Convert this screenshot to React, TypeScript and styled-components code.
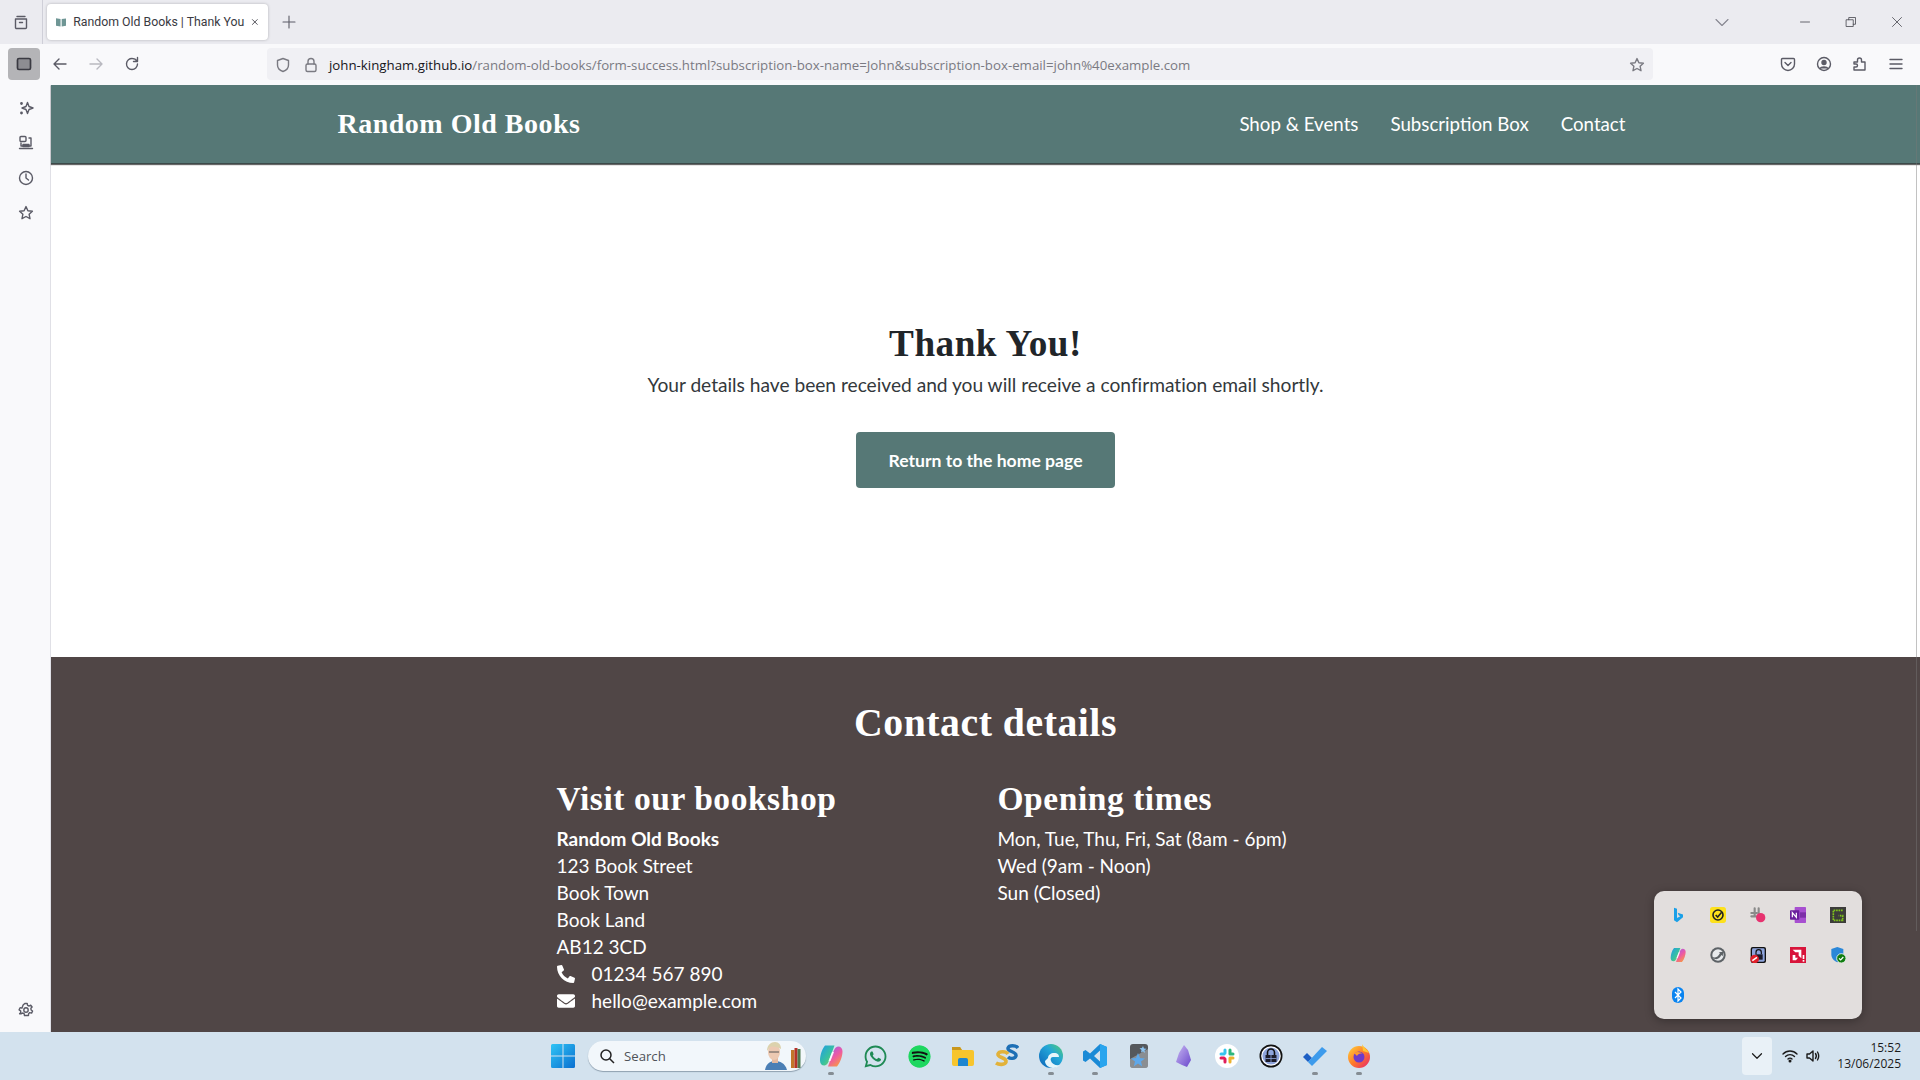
import styled, { createGlobalStyle } from "styled-components";
import { FaEnvelope, FaPhone, FaSpotify, FaWhatsapp } from "react-icons/fa";
import { ReactNode } from "react";

const GlobalStyle = createGlobalStyle`
  html, body { margin: 0; padding: 0; overflow: hidden; }
  body { font-family: Lato, "Liberation Sans", sans-serif; }
  * { box-sizing: border-box; }
`;

const titleFont = `"Liberation Serif", "DejaVu Serif", serif`;

// browser frame
const Screen = styled.div`
  position: relative;
  width: 1920px;
  height: 1080px;
  display: flex;
  flex-direction: column;
  overflow: hidden;
  background: #f9f9fb;
`;
const TabBar = styled.div`
  height: 44px;
  background: #ebebf0;
  display: flex;
  align-items: center;
  flex-shrink: 0;
`;
const TabsToggle = styled.div`
  width: 43px;
  height: 44px;
  display: flex;
  align-items: center;
  justify-content: center;
  border-right: 1px solid #cfcfd8;
  color: #5b5b66;
`;
const Tab = styled.div`
  width: 221px;
  height: 36px;
  margin-left: 4px;
  padding: 0 9px 0 9px;
  background: #fff;
  border-radius: 4px;
  box-shadow: 0 0 3px rgba(0, 0, 0, 0.25);
  display: flex;
  align-items: center;
  gap: 7px;
  font: 12.3px Roboto, sans-serif;
  color: #3a3a42;
  white-space: nowrap;
`;
const TabTitle = styled.span`
  flex: 1;
`;
const NewTab = styled.div`
  width: 36px;
  margin-left: 3px;
  display: flex;
  justify-content: center;
  color: #5b5b66;
`;
const WindowControls = styled.div`
  margin-left: auto;
  display: flex;
  align-items: center;
  color: #3c3c44;
`;
const ListTabs = styled.div`
  margin-right: 52px;
  display: flex;
  color: #85858f;
`;
const WindowButton = styled.div`
  width: 46px;
  display: flex;
  justify-content: center;
`;
const Toolbar = styled.div`
  height: 41px;
  flex-shrink: 0;
  padding: 4px 0 5px 8px;
  display: flex;
  align-items: center;
  color: #5b5b66;
`;
const SidebarToggle = styled.div`
  width: 32px;
  height: 32px;
  border-radius: 4px;
  background: #b4b4b7;
  display: flex;
  align-items: center;
  justify-content: center;
  color: #3a3a42;
`;
const NavIcons = styled.div`
  width: 227px;
  padding-left: 2px;
  display: flex;
`;
const NavIcon = styled.div<{ $muted?: boolean }>`
  width: 36px;
  height: 32px;
  display: flex;
  align-items: center;
  justify-content: center;
  color: ${(p) => (p.$muted ? "#b9b9c0" : "#5b5b66")};
`;
const UrlBar = styled.div`
  width: 1386px;
  height: 32px;
  background: #f0f0f4;
  border-radius: 4px;
  display: flex;
  align-items: center;
  padding: 1px 8px 0;
  font: 13.27px "Open Sans", sans-serif;
  color: #7a7a82;
  white-space: nowrap;
`;
const UrlIcons = styled.div`
  display: flex;
  gap: 12px;
  margin-right: 10px;
  align-items: center;
`;
const UrlHost = styled.span`
  color: #15141a;
`;
const StarSlot = styled.div`
  margin-left: auto;
  display: flex;
`;
const ToolbarRight = styled.div`
  margin-left: 127px;
  display: flex;
  gap: 20px;
  align-items: center;
`;
const Body = styled.div`
  flex: 1;
  display: flex;
  min-height: 0;
`;
const Sidebar = styled.div`
  width: 51px;
  flex-shrink: 0;
  border-right: 1px solid #e0e0e6;
  padding: 13px 0 12px 1px;
  display: flex;
  flex-direction: column;
  align-items: center;
  gap: 15px;
  color: #5b5b66;
`;
const SideIcon = styled.div<{ $bottom?: boolean }>`
  height: 20px;
  display: flex;
  align-items: center;
  margin-top: ${(p) => (p.$bottom ? "auto" : "0")};
`;

// the web page
const Page = styled.div`
  position: relative;
  flex: 1;
  display: flex;
  flex-direction: column;
  background: #fff;
`;
const ScrollThumb = styled.div`
  position: absolute;
  top: 0;
  right: 3px;
  width: 1px;
  height: 846px;
  background: rgba(120, 120, 120, 0.45);
`;
const Header = styled.header`
  height: 79px;
  background: #567876;
  box-shadow: 0 1px 1px rgba(0, 0, 0, 0.6);
  border-bottom: 1px solid #3c4a49;
  display: flex;
  justify-content: center;
  flex-shrink: 0;
`;
const HeaderInner = styled.div`
  width: 1320px;
  padding: 0 20px 0 12px;
  display: flex;
  align-items: center;
  justify-content: space-between;
`;
const Brand = styled.div`
  font-family: ${titleFont};
  font-weight: 700;
  font-size: 28px;
  letter-spacing: 0.5px;
  color: #fff;
`;
const Nav = styled.nav`
  display: flex;
  gap: 32px;
`;
const NavLink = styled.a`
  font-size: 18.7px;
  color: #fff;
`;
const Main = styled.main`
  height: 493px;
  display: flex;
  flex-direction: column;
  align-items: center;
  padding-top: 157px;
  color: #212529;
  flex-shrink: 0;
`;
const ThankYou = styled.h1`
  margin: 0;
  font-family: ${titleFont};
  font-size: 37.2px;
  line-height: 46px;
  letter-spacing: 0.5px;
`;
const Lead = styled.p`
  margin: 3px 0 33px;
  font-size: 19.2px;
  line-height: 29px;
  font-weight: 400;
  letter-spacing: -0.02px;
  color: #33383c;
`;
const HomeButton = styled.a`
  width: 259px;
  height: 56px;
  background: #567876;
  color: #fff;
  border-radius: 4px;
  display: flex;
  align-items: center;
  justify-content: center;
  font-size: 17.6px;
  font-weight: 700;
`;
const Footer = styled.footer`
  flex: 1;
  background: #504646;
  color: #fff;
  display: flex;
  flex-direction: column;
  align-items: center;
  padding-top: 43px;
`;
const FooterTitle = styled.h2`
  margin: 0 0 34px;
  font-family: ${titleFont};
  font-size: 39.8px;
  line-height: 46px;
  letter-spacing: 0.5px;
`;
const Columns = styled.div`
  width: 858px;
  display: grid;
  grid-template-columns: 441px 417px;
`;
const ColumnTitle = styled.h3`
  margin: 0 0 7px;
  font-family: ${titleFont};
  font-size: 33.5px;
  line-height: 38px;
  letter-spacing: 0.55px;
`;
const Line = styled.div<{ $strong?: boolean }>`
  height: 27px;
  display: flex;
  align-items: center;
  font-size: 19px;
  font-weight: ${(p) => (p.$strong ? 700 : 400)};
`;
const ContactIcon = styled.span`
  width: 35px;
  display: flex;
  font-size: 18px;
`;
const PhoneGlyph = styled(FaPhone)`
  transform: scaleX(-1);
`;

// windows taskbar
const Taskbar = styled.div`
  position: relative;
  height: 48px;
  flex-shrink: 0;
  background: #d3e2ee;
  display: flex;
  align-items: center;
  padding-left: 551px;
`;
const StartSlot = styled.div`
  width: 37px;
  display: flex;
`;
const SearchPill = styled.div`
  width: 218px;
  height: 30px;
  border-radius: 15px;
  background: #f2f7fb;
  box-shadow: 0 1px 1px rgba(60, 80, 100, 0.45);
  display: flex;
  align-items: center;
  padding: 0 4px 0 11px;
  gap: 9px;
  font: 13.2px "Open Sans", sans-serif;
  color: #4f5358;
`;
const SearchArt = styled.div`
  margin-left: auto;
  display: flex;
`;
const TaskIcons = styled.div`
  margin-left: 3px;
  display: flex;
`;
const TaskIcon = styled.div<{ $running?: boolean }>`
  position: relative;
  width: 44px;
  height: 48px;
  display: flex;
  align-items: center;
  justify-content: center;
  &::after {
    content: "";
    display: ${(p) => (p.$running ? "block" : "none")};
    position: absolute;
    left: 19px;
    bottom: 5px;
    width: 6px;
    height: 3px;
    border-radius: 2px;
    background: #858d94;
  }
`;
const SpotifyGlyph = styled(FaSpotify)`
  color: #1ed760;
  background: radial-gradient(circle, #111 62%, transparent 65%);
  border-radius: 50%;
`;
const Tray = styled.div`
  margin-left: auto;
  display: flex;
  align-items: center;
  padding-right: 19px;
  color: #1b1b1b;
`;
const TrayChevron = styled.div`
  width: 30px;
  height: 38px;
  border-radius: 4px;
  background: #e9f1f7;
  display: flex;
  align-items: center;
  justify-content: center;
`;
const TrayStatus = styled.div`
  margin-left: 10px;
  display: flex;
  align-items: center;
  gap: 7px;
`;
const Clock = styled.div`
  margin-left: 16px;
  text-align: right;
  font: 12px/16px "Open Sans", sans-serif;
  color: #1b1b1b;
`;
const TrayPopup = styled.div`
  position: absolute;
  left: 1654px;
  top: 891px;
  width: 208px;
  height: 128px;
  padding: 4px;
  background: #e2dedd;
  border-radius: 10px;
  box-shadow: 0 2px 10px rgba(0, 0, 0, 0.3);
  display: grid;
  grid-template-columns: repeat(5, 40px);
  grid-auto-rows: 40px;
`;
const TrayCell = styled.div`
  display: flex;
  align-items: center;
  justify-content: center;
`;

const Ico = ({ s = 16, children, sw = 1.4 }: { s?: number; children: ReactNode; sw?: number }) => (
  <svg width={s} height={s} viewBox="0 0 16 16" fill="none" stroke="currentColor" strokeWidth={sw} strokeLinecap="round" strokeLinejoin="round">
    {children}
  </svg>
);

const Star = () => (
  <Ico>
    <path d="M8 1.6l1.9 4.1 4.5.5-3.3 3 .9 4.500L8 11.500l-4 2.200.9-4.500-3.300-3 4.500-.5z" />
  </Ico>
);

const Color = ({ s = 24, children }: { s?: number; children: ReactNode }) => (
  <svg width={s} height={s} viewBox="0 0 24 24">
    {children}
  </svg>
);

const WindowsLogo = () => (
  <Color>
    <defs>
      <linearGradient id="win" x1="0" y1="0" x2="1" y2="1">
        <stop offset="0" stopColor="#2fc4f5" />
        <stop offset="1" stopColor="#0a6fd0" />
      </linearGradient>
    </defs>
    <path d="M0 1.500A1.500 1.500 0 011.500 0h10v11.500H0zM12.500 0h10A1.500 1.500 0 0124 1.500v10H12.500zM0 12.500h11.500V24h-10A1.500 1.500 0 010 22.500zM12.500 12.500H24v10a1.500 1.500 0 01-1.500 1.500h-10z" fill="url(#win)" />
  </Color>
);

const Portrait = () => (
  <svg width="38" height="28" viewBox="0 0 38 28">
    <path d="M1 28c1-6 5-9 10-9s10 2 12 9z" fill="#4b7fb5" />
    <rect x="8" y="14" width="6" height="7" fill="#e3b9a0" />
    <ellipse cx="10" cy="10" rx="6" ry="8" fill="#ecc9b2" />
    <path d="M3 9c0-6 4-9 8-9s6 3 6 7c-3-2-8-3-11-2-1 1-2 3-3 4z" fill="#dcd2ad" />
    <path d="M5 10h10" stroke="#555" strokeWidth="1" />
    <rect x="27" y="8" width="3.500" height="18" fill="#c2762b" />
    <rect x="30.500" y="6" width="3" height="20" fill="#b5332a" />
    <rect x="33.500" y="7" width="3" height="19" fill="#4f7a50" />
  </svg>
);

const Copilot = ({ s = 24 }: { s?: number }) => (
  <Color s={s}>
    <defs>
      <linearGradient id="copA" x1="0" y1="0" x2="1" y2="1">
        <stop offset="0" stopColor="#1f9ce8" />
        <stop offset="0.55" stopColor="#38c1a0" />
        <stop offset="1" stopColor="#8fd14f" />
      </linearGradient>
      <linearGradient id="copB" x1="0.2" y1="0" x2="0.8" y2="1">
        <stop offset="0" stopColor="#a45be6" />
        <stop offset="0.5" stopColor="#ee5aa2" />
        <stop offset="1" stopColor="#f9a03a" />
      </linearGradient>
    </defs>
    <path d="M18 22.500h-9l5.500-15c.8-2.500 2.500-5 4.500-5 3 0 4.500 2 4.500 5 0 4-2 11-5.500 15z" fill="url(#copB)" />
    <path d="M6 1.500h9.500L10 16.500c-.8 2.500-2.500 5-4.500 5-3 0-4.500-2-4.500-5 0-4 1.500-11 5-15z" fill="url(#copA)" />
    <path d="M13 8h2l-3.500 9h-2z" fill="#fff" opacity="0.85" />
  </Color>
);

const FolderIcon = () => (
  <Color>
    <path d="M1 5a2 2 0 012-2h6l2 3h10a2 2 0 012 2v12a2 2 0 01-2 2H3a2 2 0 01-2-2z" fill="#f7c52d" />
    <path d="M1 3h8l2 3H1z" fill="#c9971c" />
    <path d="M7 16a2 2 0 012-2h6a2 2 0 012 2v6H7z" fill="#1e86cf" />
  </Color>
);

const DoubleS = () => (
  <Color>
    <path d="M23 4c-2-3-9-3-10 0-1 4 9 3 8 8-1 3-6 3-8 1" fill="none" stroke="#1d6fb5" strokeWidth="3.400" />
    <path d="M13 10c-2-3-9-3-10 0-1 4 9 3 8 8-1 3-7 3-10 1" fill="none" stroke="#e2b23a" strokeWidth="3.600" />
  </Color>
);

const EdgeIcon = () => (
  <Color>
    <defs>
      <linearGradient id="edge" x1="0" y1="1" x2="1" y2="0">
        <stop offset="0" stopColor="#0b63b8" />
        <stop offset="0.6" stopColor="#23a6d8" />
        <stop offset="1" stopColor="#58cf6a" />
      </linearGradient>
    </defs>
    <circle cx="12" cy="12" r="12" fill="url(#edge)" />
    <path d="M9 14c0-3 3-5 6-5 4 0 5 2 5 4h-6c-2 0-3 2-2 4 1 3 5 5 9 4-2 2-4 3-7 3-4 0-8-3-8-7z" fill="#e6f5fa" />
  </Color>
);

const VsCode = () => (
  <Color>
    <path d="M17 0l7 3v18l-7 3L7 14.500l-4.500 3.500L0 16.500v-9L2.500 6 7 9.500zM17 6.500L11 12l6 5.500z" fill="#1a8ad6" />
    <path d="M17 0l7 3v18l-7 3z" fill="#2aa5ee" />
  </Color>
);

const StarBox = () => (
  <Color>
    <rect x="3" y="0" width="18" height="24" rx="3" fill="#55585c" />
    <path d="M3 15L21 5v16a3 3 0 01-3 3H6a3 3 0 01-3-3z" fill="#bfc3c8" opacity="0.5" />
    <path d="M11 9l2 5 5 .5-4 3 1.200 5L11 19.500 6.800 22.500 8 17.500l-4-3 5-.5z" fill="#5ea8ea" />
    <path d="M16 2l1 2.500 2.500.3-2 1.700.6 2.500L16 7.500 14 8.500l.5-2.500-2-1.700 2.500-.3z" fill="#8cc3f0" />
  </Color>
);

const Obsidian = () => (
  <Color>
    <defs>
      <linearGradient id="obs" x1="0" y1="0" x2="1" y2="1">
        <stop offset="0" stopColor="#c9b8f2" />
        <stop offset="1" stopColor="#6a48cc" />
      </linearGradient>
    </defs>
    <path d="M13 1l4 5 3 10-4 7-5-2-6-3 3-9z" fill="url(#obs)" />
  </Color>
);

const Slack = () => (
  <Color>
    <circle cx="12" cy="12" r="12" fill="#fff" />
    <rect x="8.500" y="4.500" width="3" height="6" rx="1.500" fill="#36c5f0" />
    <rect x="4.500" y="8.500" width="6" height="3" rx="1.500" fill="#36c5f0" />
    <rect x="13.500" y="4.500" width="3" height="6" rx="1.500" fill="#2eb67d" />
    <rect x="13.500" y="8.500" width="6" height="3" rx="1.500" fill="#2eb67d" />
    <rect x="13.500" y="12.500" width="6" height="3" rx="1.500" fill="#ecb22e" />
    <rect x="13.500" y="13.500" width="3" height="6" rx="1.500" fill="#ecb22e" />
    <rect x="8.500" y="13.500" width="3" height="6" rx="1.500" fill="#e01e5a" />
    <rect x="4.500" y="12.500" width="6" height="3" rx="1.500" fill="#e01e5a" />
  </Color>
);

const KeePass = () => (
  <Color>
    <circle cx="12" cy="12" r="11.500" fill="#111" />
    <circle cx="12" cy="12" r="9.800" fill="#fff" />
    <circle cx="12" cy="12" r="8.600" fill="#8ea4dc" />
    <path d="M8.500 11V8.500a3.500 3.500 0 017 0V11" fill="none" stroke="#111" strokeWidth="1.600" />
    <rect x="6.500" y="11" width="11" height="7" fill="#1c1c2a" />
    <path d="M6.500 14.500h11M12 11v7" stroke="#8ea4dc" strokeWidth="0.800" />
  </Color>
);

const TodoCheck = () => (
  <Color>
    <path d="M0 13l4-4 5 5-4 4z" fill="#1d5fc4" />
    <path d="M5 18L19 3l5 4L9 22z" fill="#3d9bec" />
  </Color>
);

const Firefox = () => (
  <Color>
    <defs>
      <linearGradient id="ff" x1="0" y1="0" x2="1" y2="1">
        <stop offset="0" stopColor="#ffd43a" />
        <stop offset="0.5" stopColor="#ff7a2a" />
        <stop offset="1" stopColor="#e6206f" />
      </linearGradient>
    </defs>
    <circle cx="12" cy="13" r="11" fill="url(#ff)" />
    <path d="M15 0c1 3 5 5 7 9l-6-2z" fill="#ffc531" />
    <circle cx="12" cy="13" r="5.500" fill="#6e3bc9" />
    <path d="M7 9c3-2 7-1 9 1-3-1-5 0-6 2-1-1-2-2-3-3z" fill="#ff9a2e" />
  </Color>
);

const Bing = () => (
  <Color s={16}>
    <path d="M6 1l4.500 1.500v14l5-2.800-2.500-1.200-1.500-4 8 2.800v4L10.500 23 6 20z" fill="#1aa0e8" />
  </Color>
);

const Norton = () => (
  <Color s={16}>
    <rect width="24" height="24" rx="4" fill="#fde11c" />
    <circle cx="12" cy="12" r="7.500" fill="none" stroke="#222" strokeWidth="2.400" />
    <path d="M8.500 12l3 3 6-7" fill="none" stroke="#222" strokeWidth="2.400" />
  </Color>
);

const SlackTray = () => (
  <Color s={16}>
    <path d="M2 9h8M7 2v10M13 2v8M2 14h7" stroke="#8a8a8a" strokeWidth="3.200" strokeLinecap="round" fill="none" />
    <circle cx="16" cy="16" r="7" fill="#e7326f" />
  </Color>
);

const OneNote = () => (
  <Color s={16}>
    <rect x="7" y="0" width="17" height="24" rx="1" fill="#a74fd0" />
    <rect x="15" y="8" width="9" height="8" fill="#7d2fa8" />
    <rect x="0" y="5" width="14" height="14" rx="1" fill="#6a1f9c" />
    <path d="M3.500 15.500v-7l6 7v-7" stroke="#fff" strokeWidth="1.800" fill="none" />
  </Color>
);

const GreenG = () => (
  <Color s={16}>
    <rect width="24" height="24" fill="#3c3c3a" />
    <path d="M19 5H5v15h14v-7h-6" stroke="#7fc31c" strokeWidth="2.500" strokeDasharray="2.500 1.200" fill="none" />
  </Color>
);

const SteamLike = () => (
  <Color s={16}>
    <circle cx="12" cy="12" r="11.500" fill="#5d6266" />
    <circle cx="12" cy="12" r="8.500" fill="#e8eaec" />
    <path d="M3 15c5 2 9 0 12-6l-2-1 7-1-1 7-2-2c-3 6-8 9-14 3z" fill="#5d6266" />
  </Color>
);

const KeePassBlocked = () => (
  <Color s={16}>
    <rect x="1" y="0" width="23" height="24" rx="3" fill="#111" />
    <rect x="3" y="2" width="19" height="20" rx="2" fill="#8ea4dc" />
    <path d="M9 11V8a4 4 0 018 0v3" fill="none" stroke="#111" strokeWidth="1.800" />
    <rect x="8" y="11" width="11" height="8" fill="#1c1c2a" />
    <circle cx="7" cy="18" r="6.500" fill="#e0202a" />
    <path d="M3.500 20.500l7-5" stroke="#fff" strokeWidth="2.200" />
  </Color>
);

const AmdLike = () => (
  <Color s={16}>
    <rect width="24" height="24" fill="#d8143a" />
    <path d="M4 4h13v13l-4-4V8H8z" fill="#fff" />
    <path d="M4 12h4v4h4l-3 4H4z" fill="#fff" />
    <rect x="19" y="12" width="2.500" height="6" fill="#fff" />
    <rect x="19" y="19.500" width="2.500" height="2.500" fill="#fff" />
  </Color>
);

const Defender = () => (
  <Color s={16}>
    <path d="M11 0l9 3v8c0 6-4 10-9 12-5-2-9-6-9-12V3z" fill="#2a87d8" />
    <circle cx="17" cy="17" r="7" fill="#107c10" stroke="#fff" strokeWidth="1.200" />
    <path d="M13.500 17l2.500 2.500 4-4.500" stroke="#fff" strokeWidth="1.800" fill="none" />
  </Color>
);

const Bluetooth = () => (
  <svg width="16" height="16" viewBox="0 0 16 16">
    <rect x="2" width="12" height="16" rx="6" fill="#0a84f0" />
    <path d="M5 5l6 6-3 3V2l3 3-6 6" fill="none" stroke="#fff" strokeWidth="1.200" />
  </svg>
);

const urlPath = "/random-old-books/form-success.html?subscription-box-name=John&subscription-box-email=john%40example.com";

export default function App() {
  return (
    <Screen>
      <GlobalStyle />
      <TabBar>
        <TabsToggle>
          <Ico>
            <path d="M4 2.500h8M2.500 5h11v8.500a1 1 0 01-1 1h-9a1 1 0 01-1-1zM6.500 8.500h3" />
          </Ico>
        </TabsToggle>
        <Tab>
          <svg width="16" height="14" viewBox="0 0 14 12">
            <path d="M0 1l6.200 1v10L0 11zM14 1L7.800 2v10l6.200-1z" fill="#6f9695" />
          </svg>
          <TabTitle>Random Old Books | Thank You</TabTitle>
          <Ico s={12} sw={1.8}>
            <path d="M3 3l10 10M13 3L3 13" />
          </Ico>
        </Tab>
        <NewTab>
          <Ico sw={1.1}>
            <path d="M8 2v12M2 8h12" />
          </Ico>
        </NewTab>
        <WindowControls>
          <ListTabs>
            <Ico sw={1.1}>
              <path d="M2 5.500l6 6 6-6" />
            </Ico>
          </ListTabs>
          <WindowButton>
            <Ico s={12} sw={1}>
              <path d="M2 8h12" />
            </Ico>
          </WindowButton>
          <WindowButton>
            <Ico s={12} sw={1}>
              <path d="M2 5h9v9H2zM5 5V2h9v9h-3" />
            </Ico>
          </WindowButton>
          <WindowButton>
            <Ico s={12} sw={1}>
              <path d="M2 2l12 12M14 2L2 14" />
            </Ico>
          </WindowButton>
        </WindowControls>
      </TabBar>

      <Toolbar>
        <SidebarToggle>
          <Ico sw={1.7}>
            <rect x="1.500" y="2.500" width="13" height="11" rx="1.500" fill="#8d8d92" />
          </Ico>
        </SidebarToggle>
        <NavIcons>
          <NavIcon>
            <Ico>
              <path d="M14 8H2M7 3L2 8l5 5" />
            </Ico>
          </NavIcon>
          <NavIcon $muted>
            <Ico>
              <path d="M2 8h12M9 3l5 5-5 5" />
            </Ico>
          </NavIcon>
          <NavIcon>
            <Ico>
              <path d="M13.500 8A5.500 5.500 0 118.500 2.500c2 0 3.500 1 4.500 2.500M13.500 1.500V5.500H9.500" />
            </Ico>
          </NavIcon>
        </NavIcons>
        <UrlBar>
          <UrlIcons>
            <Ico>
              <path d="M8 1.500l5.500 2v4.500c0 3-2.500 5.500-5.500 6.500-3-1-5.500-3.500-5.500-6.500V3.500z" />
            </Ico>
            <Ico>
              <rect x="3" y="7" width="10" height="7.500" rx="1.500" />
              <path d="M5 7V4.500a3 3 0 016 0V7" />
            </Ico>
          </UrlIcons>
          <UrlHost>john-kingham.github.io</UrlHost>
          {urlPath}
          <StarSlot>
            <Star />
          </StarSlot>
        </UrlBar>
        <ToolbarRight>
          <Ico>
            <path d="M2.500 2.500h11a1 1 0 011 1V8a6.500 6.500 0 01-13 0V3.500a1 1 0 011-1zM5 6.500l3 3 3-3" />
          </Ico>
          <Ico>
            <circle cx="8" cy="8" r="6.500" />
            <circle cx="8" cy="6.500" r="2" fill="currentColor" />
            <path d="M4 12.500c1-2 7-2 8 0" fill="currentColor" />
          </Ico>
          <Ico>
            <path d="M2 6h3.500V4a2 2 0 014 0v2H13v8H2v-3h2a1.500 1.500 0 000-3H2z" />
          </Ico>
          <Ico>
            <path d="M2 3.500h12M2 8h12M2 12.500h12" />
          </Ico>
        </ToolbarRight>
      </Toolbar>

      <Body>
        <Sidebar>
          <SideIcon>
            <Ico>
              <path d="M9.500 2.500l1.500 4 4 1.500-4 1.500-1.500 4-1.500-4L4 8l4-1.500z" />
              <circle cx="3.500" cy="3.500" r="0.700" fill="currentColor" />
              <circle cx="3.500" cy="13" r="0.700" fill="currentColor" />
            </Ico>
          </SideIcon>
          <SideIcon>
            <Ico>
              <rect x="2" y="1.500" width="6" height="5" rx="1" />
              <path d="M11 3h2v8H3V8M1.500 13.500h13" />
              <rect x="5" y="9.500" width="6" height="2" fill="currentColor" />
            </Ico>
          </SideIcon>
          <SideIcon>
            <Ico>
              <circle cx="8" cy="8" r="6.500" />
              <path d="M8 4v4l2.500 2" />
            </Ico>
          </SideIcon>
          <SideIcon>
            <Star />
          </SideIcon>
          <SideIcon $bottom>
            <Ico>
              <circle cx="8" cy="8" r="2.200" />
              <path d="M6.800 1.500h2.400l.4 1.800 1.500.7 1.600-.9 1.400 1.900-1.200 1.300.2 1.700 1.500 1-1 2.100-1.800-.5-1.200 1.100-.1 1.800H6.500l-.4-1.800-1.500-.7-1.600.9L1.600 11.800l1.200-1.300-.2-1.700-1.500-1 1-2.100 1.800.5L5.100 3.100z" />
            </Ico>
          </SideIcon>
        </Sidebar>
        <Page>
          <Header>
            <HeaderInner>
              <Brand>Random Old Books</Brand>
              <Nav>
                <NavLink>Shop &amp; Events</NavLink>
                <NavLink>Subscription Box</NavLink>
                <NavLink>Contact</NavLink>
              </Nav>
            </HeaderInner>
          </Header>
          <Main>
            <ThankYou>Thank You!</ThankYou>
            <Lead>Your details have been received and you will receive a confirmation email shortly.</Lead>
            <HomeButton>Return to the home page</HomeButton>
          </Main>
          <Footer>
            <FooterTitle>Contact details</FooterTitle>
            <Columns>
              <div>
                <ColumnTitle>Visit our bookshop</ColumnTitle>
                <Line $strong>Random Old Books</Line>
                <Line>123 Book Street</Line>
                <Line>Book Town</Line>
                <Line>Book Land</Line>
                <Line>AB12 3CD</Line>
                <Line>
                  <ContactIcon>
                    <PhoneGlyph />
                  </ContactIcon>
                  01234 567 890
                </Line>
                <Line>
                  <ContactIcon>
                    <FaEnvelope />
                  </ContactIcon>
                  hello@example.com
                </Line>
              </div>
              <div>
                <ColumnTitle>Opening times</ColumnTitle>
                <Line>Mon, Tue, Thu, Fri, Sat (8am - 6pm)</Line>
                <Line>Wed (9am - Noon)</Line>
                <Line>Sun (Closed)</Line>
              </div>
            </Columns>
          </Footer>
          <ScrollThumb />
        </Page>
      </Body>

      <Taskbar>
        <StartSlot>
          <WindowsLogo />
        </StartSlot>
        <SearchPill>
          <svg width="16" height="16" viewBox="0 0 16 16" fill="none" stroke="#222" strokeWidth="1.500">
            <circle cx="7" cy="7" r="5" />
            <path d="M10.500 10.500L15 15" />
          </svg>
          Search
          <SearchArt>
            <Portrait />
          </SearchArt>
        </SearchPill>
        <TaskIcons>
          <TaskIcon $running>
            <Copilot />
          </TaskIcon>
          <TaskIcon>
            <FaWhatsapp size={25} color="#1f8a55" />
          </TaskIcon>
          <TaskIcon>
            <SpotifyGlyph size={23} />
          </TaskIcon>
          <TaskIcon>
            <FolderIcon />
          </TaskIcon>
          <TaskIcon>
            <DoubleS />
          </TaskIcon>
          <TaskIcon $running>
            <EdgeIcon />
          </TaskIcon>
          <TaskIcon $running>
            <VsCode />
          </TaskIcon>
          <TaskIcon>
            <StarBox />
          </TaskIcon>
          <TaskIcon>
            <Obsidian />
          </TaskIcon>
          <TaskIcon>
            <Slack />
          </TaskIcon>
          <TaskIcon>
            <KeePass />
          </TaskIcon>
          <TaskIcon $running>
            <TodoCheck />
          </TaskIcon>
          <TaskIcon $running>
            <Firefox />
          </TaskIcon>
        </TaskIcons>
        <Tray>
          <TrayChevron>
            <Ico s={12} sw={1.6}>
              <path d="M2 5l6 6 6-6" />
            </Ico>
          </TrayChevron>
          <TrayStatus>
            <Ico>
              <path d="M1 6c4-4 10-4 14 0M3.500 8.500c2.500-2.500 6.500-2.500 9 0M6 11c1-1 3-1 4 0" />
              <circle cx="8" cy="13" r="0.800" fill="currentColor" />
            </Ico>
            <Ico>
              <path d="M2 6h2.500L8 3v10L4.500 10H2zM10.500 5.500c1 1.500 1 3.500 0 5M12.500 4c1.500 2.500 1.500 5.500 0 8" />
            </Ico>
          </TrayStatus>
          <Clock>
            15:52
            <br />
            13/06/2025
          </Clock>
        </Tray>
      </Taskbar>

      <TrayPopup>
        <TrayCell><Bing /></TrayCell>
        <TrayCell><Norton /></TrayCell>
        <TrayCell><SlackTray /></TrayCell>
        <TrayCell><OneNote /></TrayCell>
        <TrayCell><GreenG /></TrayCell>
        <TrayCell><Copilot s={16} /></TrayCell>
        <TrayCell><SteamLike /></TrayCell>
        <TrayCell><KeePassBlocked /></TrayCell>
        <TrayCell><AmdLike /></TrayCell>
        <TrayCell><Defender /></TrayCell>
        <TrayCell><Bluetooth /></TrayCell>
      </TrayPopup>
    </Screen>
  );
}
